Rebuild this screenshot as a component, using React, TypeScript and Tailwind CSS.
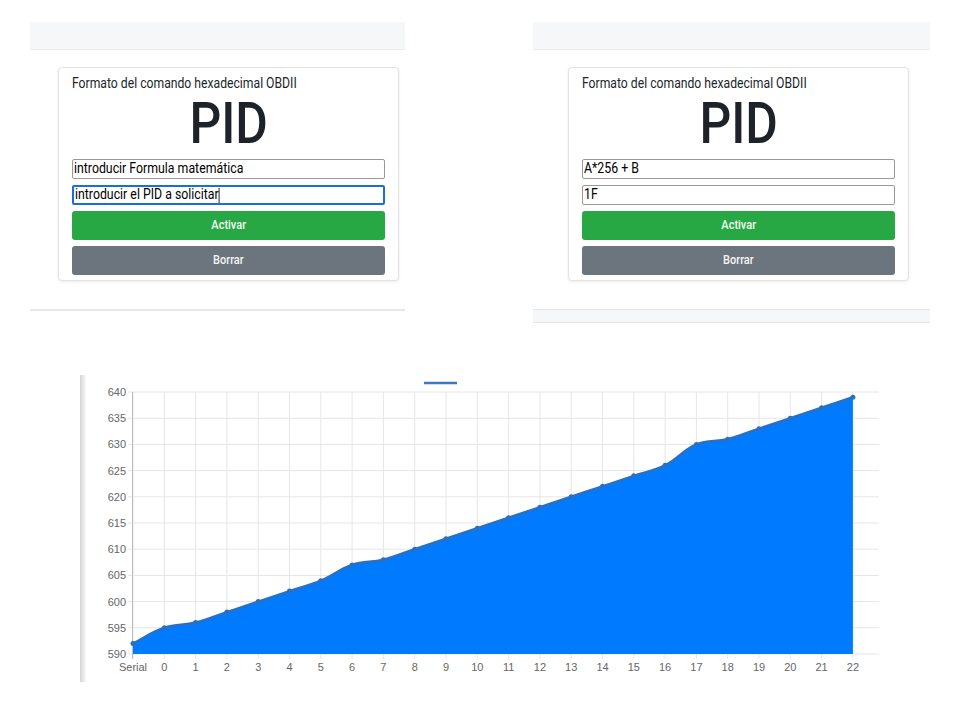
import React from "react";

const labels = ["Serial", ...Array.from({ length: 23 }, (_, i) => String(i))];
const values = [592, 595, 596, 598, 600, 602, 604, 607, 608, 610, 612, 614, 616, 618, 620, 622, 624, 626, 630, 631, 633, 635, 637, 639];

const X0 = 133;
const STEP = 31.3;
const BASE = 654;
const TOP = 392;
const yOf = (v: number) => BASE - ((v - 590) / 50) * (BASE - TOP);

type Pt = { x: number; y: number };

function controlPoints(pts: Pt[], t = 0.4) {
  return pts.map((cur, i) => {
    const prev = pts[i - 1] || cur;
    const next = pts[i + 1] || cur;
    const d01 = Math.hypot(cur.x - prev.x, cur.y - prev.y);
    const d12 = Math.hypot(next.x - cur.x, next.y - cur.y);
    const s01 = d01 / (d01 + d12 || 1);
    const s12 = d12 / (d01 + d12 || 1);
    const fa = t * s01;
    const fb = t * s12;
    return {
      prev: { x: cur.x - fa * (next.x - prev.x), y: cur.y - fa * (next.y - prev.y) },
      next: { x: cur.x + fb * (next.x - prev.x), y: cur.y + fb * (next.y - prev.y) },
    };
  });
}

function Chart() {
  const pts = values.map((v, i) => ({ x: X0 + i * STEP, y: yOf(v) }));
  const cps = controlPoints(pts);
  let line = `M${pts[0].x},${pts[0].y}`;
  for (let i = 1; i < pts.length; i++) {
    const a = cps[i - 1].next;
    const b = cps[i].prev;
    line += ` C${a.x},${a.y} ${b.x},${b.y} ${pts[i].x},${pts[i].y}`;
  }
  const area = `${line} L${pts[pts.length - 1].x},${BASE} L${pts[0].x},${BASE} Z`;
  const ticks = [590, 595, 600, 605, 610, 615, 620, 625, 630, 635, 640];

  return (
    <div className="flex ml-[80px] mt-[52px]">
      <div className="w-[6px] h-[307px] bg-gradient-to-r from-[#d4d4d4] to-[#fafafa]" />
      <svg width="794" height="320" viewBox="86 375 794 320" className="block">
        <line x1="424" y1="383" x2="457" y2="383" stroke="#3b7ac0" strokeWidth="2.5" />
        {ticks.map((v) => (
          <g key={v}>
            <line x1="128" x2="879" y1={yOf(v)} y2={yOf(v)} stroke="#e6e6e6" strokeWidth="1" />
            <text x="126" y={yOf(v) + 4} textAnchor="end" fontSize="11" fill="#666" fontFamily="Liberation Sans, Arial, sans-serif">
              {v}
            </text>
          </g>
        ))}
        {labels.map((l, i) => (
          <g key={l}>
            <line x1={X0 + i * STEP} x2={X0 + i * STEP} y1={TOP} y2="659" stroke="#e6e6e6" strokeWidth="1" />
            <text x={X0 + i * STEP} y="671" textAnchor="middle" fontSize="11" fill="#666" fontFamily="Liberation Sans, Arial, sans-serif">
              {l}
            </text>
          </g>
        ))}
        <line x1="132.5" x2="132.5" y1={TOP} y2="659" stroke="#bdbdbd" strokeWidth="1" />
        <path d={area} fill="#007bff" />
        <path d={line} fill="none" stroke="#2a70c2" strokeWidth="2.5" />
        {pts.map((p, i) => (
          <circle key={i} cx={p.x} cy={p.y} r="2.5" fill="#2a70c2" />
        ))}
      </svg>
    </div>
  );
}

interface PanelProps {
  formula: string;
  pid: string;
  focused?: boolean;
  className: string;
  cardClass: string;
  doubleBottom?: boolean;
}

function Panel({ formula, pid, focused, className, cardClass, doubleBottom }: PanelProps) {
  return (
    <div className={className}>
      <div className="h-[28px] bg-[#f6f7f9] border-b border-[#ececec]" />
      <div className={`mt-[17px] border border-[#e3e3e3] rounded-[4px] shadow-[0_1px_3px_rgba(0,0,0,0.08)] bg-white pt-[6px] pl-[13px] pr-[13px] pb-[5px] ${cardClass}`}>
        <div className="text-[14px] leading-[18px] text-[#212529] whitespace-nowrap">
          <span className="inline-block origin-left scale-x-[0.87]">Formato del comando hexadecimal OBDII</span>
        </div>
        <div className="flex justify-center">
          <span className="inline-block text-[58px] leading-[62px] font-medium text-[#1d2329] scale-x-[0.86]">PID</span>
        </div>
        <div className="mt-[5px] h-[20px] border border-[#999] rounded-[2px] flex items-center px-[1px] text-[14.5px] text-black whitespace-nowrap">
          <span className="inline-block origin-left scale-x-[0.85]">{formula}</span>
        </div>
        <div
          className={`mt-[6px] h-[20px] rounded-[2px] flex items-center px-[1px] text-[14.5px] text-black whitespace-nowrap ${
            focused ? "border-2 border-[#1a6fd6]" : "border border-[#999]"
          }`}
        >
          <span className="inline-flex items-center origin-left scale-x-[0.85]">
            {pid}
            {focused && <span className="w-px h-[15px] bg-black" />}
          </span>
        </div>
        <button className="mt-[6px] w-full h-[29px] rounded-[3px] bg-[#28a745] text-[#f4fff6] text-[12.5px] font-medium">
          <span className="inline-block scale-x-[0.88]">Activar</span>
        </button>
        <button className="mt-[6px] w-full h-[29px] rounded-[3px] bg-[#6c757d] text-[#f4f4f4] text-[12.5px] font-medium">
          <span className="inline-block scale-x-[0.88]">Borrar</span>
        </button>
      </div>
      {doubleBottom ? (
        <div className="mt-[28px] h-[14px] border-t border-[#e3e3e3] bg-[#f6f7f9] border-b" />
      ) : (
        <div className="mt-[28px] h-[2px] bg-[#e6e6e6]" />
      )}
    </div>
  );
}

export default function App() {
  return (
    <div className="w-[960px] h-[720px] bg-white overflow-hidden" style={{ fontFamily: "Roboto, 'Noto Sans', sans-serif" }}>
      <div className="flex pt-[22px]">
        <Panel
          formula="introducir Formula matemática"
          pid="introducir el PID a solicitar"
          focused
          className="ml-[30px] w-[375px]"
          cardClass="ml-[28px] mr-[6px]"
        />
        <Panel
          formula="A*256 + B"
          pid="1F"
          className="ml-[128px] w-[397px]"
          cardClass="ml-[35px] mr-[21px]"
          doubleBottom
        />
      </div>
      <Chart />
    </div>
  );
}
